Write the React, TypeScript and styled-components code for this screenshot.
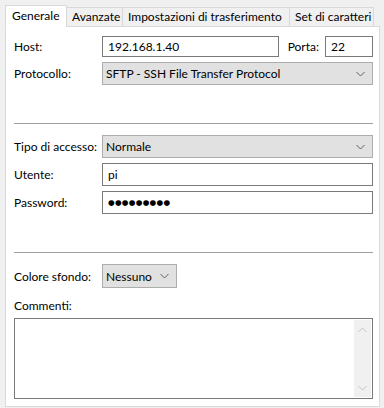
import styled, { createGlobalStyle } from 'styled-components';

const GlobalStyle = createGlobalStyle`
  html, body {
    margin: 0;
    padding: 0;
    background: #f0f0f0;
  }
  body {
    font-family: Lato, 'Liberation Sans', sans-serif;
    font-size: 12px;
    color: #000;
  }
`;

const tabs = [
  { label: 'Generale', width: 62 },
  { label: 'Avanzate', width: 57 },
  { label: 'Impostazioni di trasferimento', width: 168 },
  { label: 'Set di caratteri', width: 85 },
];

const Chevron = ({ color = '#606060', up = false }: { color?: string; up?: boolean }) => (
  <svg width="9" height="6" viewBox="0 0 9 6">
    <polyline
      points={up ? '0.5,5 4.5,1 8.5,5' : '0.5,1 4.5,5 8.5,1'}
      fill="none"
      stroke={color}
      strokeWidth="1"
    />
  </svg>
);

const App = () => {
  return (
    <>
      <GlobalStyle />
      <Window>
        <TabStrip>
          {tabs.map((tab, i) => (
            <Tab key={tab.label} $active={i === 0} $width={tab.width}>
              {tab.label}
            </Tab>
          ))}
        </TabStrip>
        <Panel>
          <Section $top={9}>
            <Row>
              <Label>Host:</Label>
              <TextBox $width={177} $height={21}>192.168.1.40</TextBox>
              <PortLabel>Porta:</PortLabel>
              <TextBox $width={48} $height={21}>22</TextBox>
            </Row>
            <Row $gap={5}>
              <Label>Protocollo:</Label>
              <Select $height={23}>
                <span>SFTP - SSH File Transfer Protocol</span>
                <Chevron />
              </Select>
            </Row>
          </Section>

          <Separator $top={38} />

          <Section $top={11}>
            <Row>
              <Label>Tipo di accesso:</Label>
              <Select $height={23}>
                <span>Normale</span>
                <Chevron />
              </Select>
            </Row>
            <Row $gap={5}>
              <Label>Utente:</Label>
              <TextBox $height={23}>pi</TextBox>
            </Row>
            <Row $gap={5}>
              <Label>Password:</Label>
              <TextBox $height={23}>
                <Mask>●●●●●●●●●</Mask>
              </TextBox>
            </Row>
          </Section>

          <Separator $top={38} />

          <Section $top={11}>
            <Row>
              <Label>Colore sfondo:</Label>
              <Select $height={24} $width={75}>
                <span>Nessuno</span>
                <Chevron />
              </Select>
            </Row>
            <CommentLabel>Commenti:</CommentLabel>
            <CommentBox>
              <CommentText />
              <ScrollBar>
                <Chevron color="#c2c2c2" up />
                <Chevron color="#c2c2c2" />
              </ScrollBar>
            </CommentBox>
          </Section>
        </Panel>
      </Window>
    </>
  );
};
export default App;

const Window = styled.div`
  width: 384px;
  height: 408px;
  padding: 5px 5px 0 5px;
  box-sizing: border-box;
  display: flex;
  flex-direction: column;
`;
const TabStrip = styled.div`
  display: flex;
  align-items: flex-end;
  height: 22px;
  position: relative;
  z-index: 1;
  margin-bottom: -1px;
`;
const Tab = styled.div<{ $active?: boolean; $width: number }>`
  box-sizing: border-box;
  width: ${({ $width }) => $width}px;
  height: ${({ $active }) => ($active ? 22 : 20)}px;
  padding: ${({ $active }) => ($active ? '2px 0 0 6px' : '1px 0 0 5px')};
  border: 1px solid #d9d9d9;
  border-bottom: ${({ $active }) => ($active ? '1px solid #fff' : '1px solid #d9d9d9')};
  background: ${({ $active }) => ($active ? '#fff' : '#f0f0f0')};
  white-space: nowrap;
  overflow: hidden;
  line-height: 16px;
  & + & {
    margin-left: -1px;
  }
`;
const Panel = styled.div`
  box-sizing: border-box;
  width: 375px;
  height: 381px;
  background: #fff;
  border: 1px solid #d9d9d9;
  padding: 0 6px 0 8px;
  display: flex;
  flex-direction: column;
`;
const Section = styled.div<{ $top: number }>`
  display: flex;
  flex-direction: column;
  margin-top: ${({ $top }) => $top}px;
`;
const Row = styled.div<{ $gap?: number }>`
  display: flex;
  align-items: center;
  margin-top: ${({ $gap }) => $gap ?? 0}px;
`;
const Label = styled.span`
  width: 88px;
  flex: 0 0 88px;
  white-space: nowrap;
`;
const PortLabel = styled.span`
  margin-left: auto;
  margin-right: 6px;
  white-space: nowrap;
`;
const TextBox = styled.div<{ $width?: number; $height: number }>`
  box-sizing: border-box;
  ${({ $width }) => ($width ? `width: ${$width}px; flex: 0 0 ${$width}px;` : 'flex: 1;')}
  height: ${({ $height }) => $height}px;
  border: 1px solid #7a7a7a;
  background: #fff;
  padding: 0 5px;
  display: flex;
  align-items: center;
  white-space: nowrap;
`;
const Mask = styled.span`
  font-family: 'DejaVu Sans', sans-serif;
  font-size: 7.6px;
  letter-spacing: 0.3px;
  line-height: 1;
`;
const Select = styled.div<{ $width?: number; $height: number }>`
  box-sizing: border-box;
  ${({ $width }) => ($width ? `width: ${$width}px;` : 'flex: 1;')}
  height: ${({ $height }) => $height}px;
  border: 1px solid #adadad;
  background: #e1e1e1;
  padding: 0 7px 0 3px;
  display: flex;
  align-items: center;
  justify-content: space-between;
  white-space: nowrap;
`;
const Separator = styled.div<{ $top: number }>`
  height: 1px;
  background: #a0a0a0;
  margin-top: ${({ $top }) => $top}px;
`;
const CommentLabel = styled.span`
  margin-top: 9px;
  line-height: 17px;
`;
const CommentBox = styled.div`
  box-sizing: border-box;
  margin-top: 4px;
  height: 81px;
  border: 1px solid #7a7a7a;
  display: flex;
  padding: 1px;
`;
const CommentText = styled.div`
  flex: 1;
`;
const ScrollBar = styled.div`
  width: 17px;
  background: #f0f0f0;
  display: flex;
  flex-direction: column;
  justify-content: space-between;
  align-items: center;
  padding: 7px 0 6px;
`;
